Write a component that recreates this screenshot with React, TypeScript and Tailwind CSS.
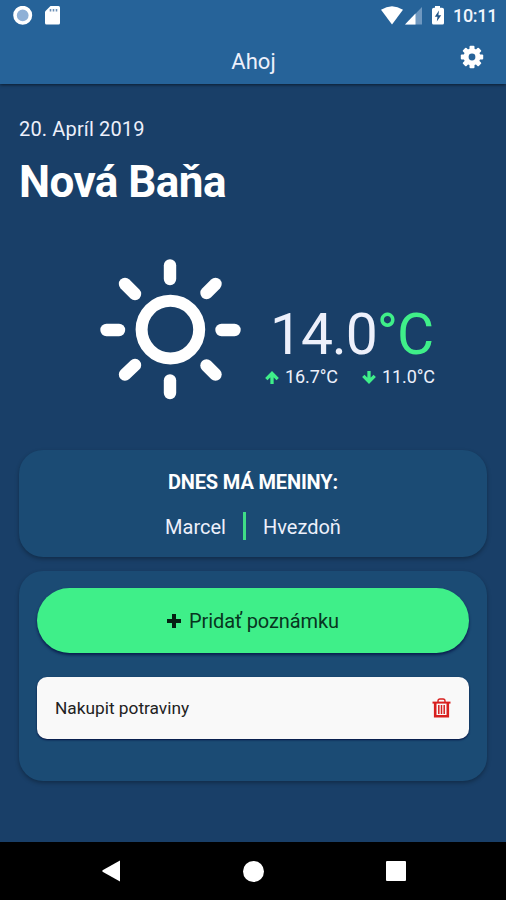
const rays = [
  'M0 -64.5V-51', 'M0 50.5V63', 'M-63.5 0H-51', 'M51.5 0H64.5',
  'M-45 -46L-35 -36', 'M45.5 -46L36.5 -37', 'M-45 44.5L-35 35', 'M45.5 44.5L36.5 35.5',
];

function Sun() {
  return (
    <svg className="block h-[144px] w-[144px]" viewBox="-72 -72 144 144" fill="none" stroke="#fff" strokeWidth="12.4" strokeLinecap="round">
      <circle cx="0.4" cy="-0.4" r="28.8" strokeWidth="12" />
      {rays.map((d) => <path key={d} d={d} />)}
    </svg>
  );
}

function Arrow({ down = false }: { down?: boolean }) {
  return (
    <svg className={down ? 'block h-[13px] w-[14px] rotate-180' : 'block h-[13px] w-[14px]'} viewBox="0 0 14 13" fill="none" stroke="#3fef89" strokeWidth="3.3">
      <path d="M7 13V2.6M1.3 8.1L7 2.4L12.7 8.1" />
    </svg>
  );
}

function Gear() {
  return (
    <svg className="block h-[24px] w-[24px]" viewBox="-12 -12 24 24">
      {[0, 45, 90, 135].map((a) => (
        <rect key={a} x="-2.5" y="-11.2" width="5" height="22.4" rx="1" fill="#fff" transform={`rotate(${a})`} />
      ))}
      <circle r="5.9" fill="none" stroke="#fff" strokeWidth="5" />
      <circle r="3.4" fill="#266399" />
    </svg>
  );
}

function StatusBar() {
  return (
    <div className="flex h-8 items-center justify-between pl-[13px] pr-[10px]">
      <svg className="block h-5 w-[50px]" viewBox="0 0 50 20">
        <circle cx="9.7" cy="9.3" r="7.7" fill="#8fb0d6" stroke="#fff" strokeWidth="3.6" />
        <path d="M37.5 0H45.5Q47 0 47 1.5V17Q47 18.5 45.5 18.5H33.5Q32 18.5 32 17V5.5Z" fill="#fff" />
        <path d="M37.5 3v2.4M40.5 3v2.4M43.5 3v2.4" stroke="#6c90b6" strokeWidth="1.6" />
      </svg>
      <div className="flex items-center">
        <svg className="block h-5 w-[64px]" viewBox="0 0 64 20">
          <path d="M0 3.8Q11 -3.4 22 3.8L11 18.5Z" fill="#fff" />
          <path d="M41 1V18.5H24Z" fill="#6f98c0" />
          <path d="M34.5 7.6V18.5H24Z" fill="#fff" />
          <path d="M54 0h5v1.8h2Q63 1.8 63 3.5V17Q63 18.5 61.5 18.5H52.5Q51 18.5 51 17V3.5Q51 1.8 53 1.8h1Z" fill="#fff" />
          <path d="M58 4.5L53.8 10.8H56.5L55.8 15.5L60.2 9.2H57.4Z" fill="#205487" />
        </svg>
        <span className="ml-[8px] w-[43px] whitespace-nowrap text-[18px] font-medium leading-5 tracking-[-0.3px] text-[#f0f5fc]">10:11</span>
      </div>
    </div>
  );
}

export default function App() {
  return (
    <div className="flex h-[900px] w-[506px] flex-col overflow-hidden bg-[#193f68] font-['Roboto',sans-serif] text-[#edf0fb]">
      <header className="h-[84px] shrink-0 bg-[#266399] shadow-[0_1px_3px_rgba(0,0,0,0.55)]">
        <StatusBar />
        <div className="grid h-[52px] grid-cols-[1fr_auto_1fr] pr-[22px]">
          <span />
          <h1 className="ml-[23px] pt-[16px] text-[22px] font-normal leading-7">Ahoj</h1>
          <div className="flex justify-end pt-[13px]"><Gear /></div>
        </div>
      </header>

      <main className="flex h-[758px] shrink-0 flex-col px-[19px]">
        <p className="mt-[33px] text-[20px] leading-6 tracking-[0.15px]">20. Apríl 2019</p>
        <h2 className="mt-[15px] text-[44px] font-bold leading-[52px] tracking-[-0.55px] text-white">Nová Baňa</h2>

        <section className="mt-[50px] flex h-[144px] pl-[79px]">
          <Sun />
          <div className="ml-[23px] pt-[44px]">
            <div className="ml-[5px] whitespace-nowrap text-[57px] font-normal leading-[65px] tracking-[-1.1px]">
              14.0<span className="text-[#3fef89]">°C</span>
            </div>
            <div className="flex h-5 items-center whitespace-nowrap text-[18px] leading-5 tracking-[-0.1px]">
              <Arrow /><span className="ml-[6px] w-[77px]">16.7°C</span>
              <Arrow down /><span className="ml-[6px]">11.0°C</span>
            </div>
          </div>
        </section>

        <section className="mt-[48px] flex h-[107px] flex-col items-center rounded-[24px] bg-[#1b4b74] shadow-[0_2px_4px_rgba(0,0,0,0.3)]">
          <h3 className="mt-[20px] text-[20px] font-bold leading-6 tracking-[-0.15px] text-white">DNES MÁ MENINY:</h3>
          <div className="mt-[18px] flex h-7 items-center text-[20px] leading-6">
            <span className="pt-0.5">Marcel</span>
            <span className="mx-[17px] h-7 w-[3px] bg-[#3fdc86]" />
            <span className="pt-0.5">Hvezdoň</span>
          </div>
        </section>

        <section className="mt-[14px] h-[210px] rounded-[24px] bg-[#1b4b74] px-[18px] pt-[17px] shadow-[0_2px_4px_rgba(0,0,0,0.3)]">
          <button className="flex h-[65px] w-full items-center justify-center rounded-full bg-[#3fef89] text-[20px] leading-6 text-[#08351f] shadow-[0_2px_3px_rgba(0,10,60,0.7)]">
            <svg className="mr-[8px] block h-[14px] w-[14px]" viewBox="0 0 14 14"><path d="M7 0V14M0 7H14" stroke="#052013" strokeWidth="4" /></svg>
            <span className="tracking-[-0.1px]">Pridať poznámku</span>
          </button>
          <div className="mt-[24px] flex h-[62px] items-center justify-between rounded-[10px] bg-[#f9f9f9] px-[18px] shadow-[0_1px_2px_rgba(0,10,60,0.9)]">
            <span className="text-[17.3px] leading-6 text-[#222]">Nakupit potraviny</span>
            <svg className="block h-[20px] w-[19px]" viewBox="0 0 19 20" fill="none" stroke="#d8201f">
              <path d="M6 4V3Q6 1 8 1H11Q13 1 13 3V4" strokeWidth="1.4" />
              <path d="M.5 4.6H18.5" strokeWidth="2" />
              <path d="M3.2 4.5V18.2H15.8V4.5" strokeWidth="2.6" />
              <path d="M6.8 7V16M9.5 7V16M12.2 7V16" strokeWidth="1.5" />
            </svg>
          </div>
        </section>
      </main>

      <nav className="flex h-[58px] shrink-0 items-center bg-black pl-[102px]">
        <svg className="block h-[22px] w-[18px]" viewBox="0 0 18 22"><path d="M18 .5V21.5L1 12Q-.5 11 1 10Z" fill="#fff" /></svg>
        <span className="ml-[123px] h-[21px] w-[21px] rounded-full bg-white" />
        <span className="ml-[122px] h-5 w-5 rounded-[1px] bg-white" />
      </nav>
    </div>
  );
}
